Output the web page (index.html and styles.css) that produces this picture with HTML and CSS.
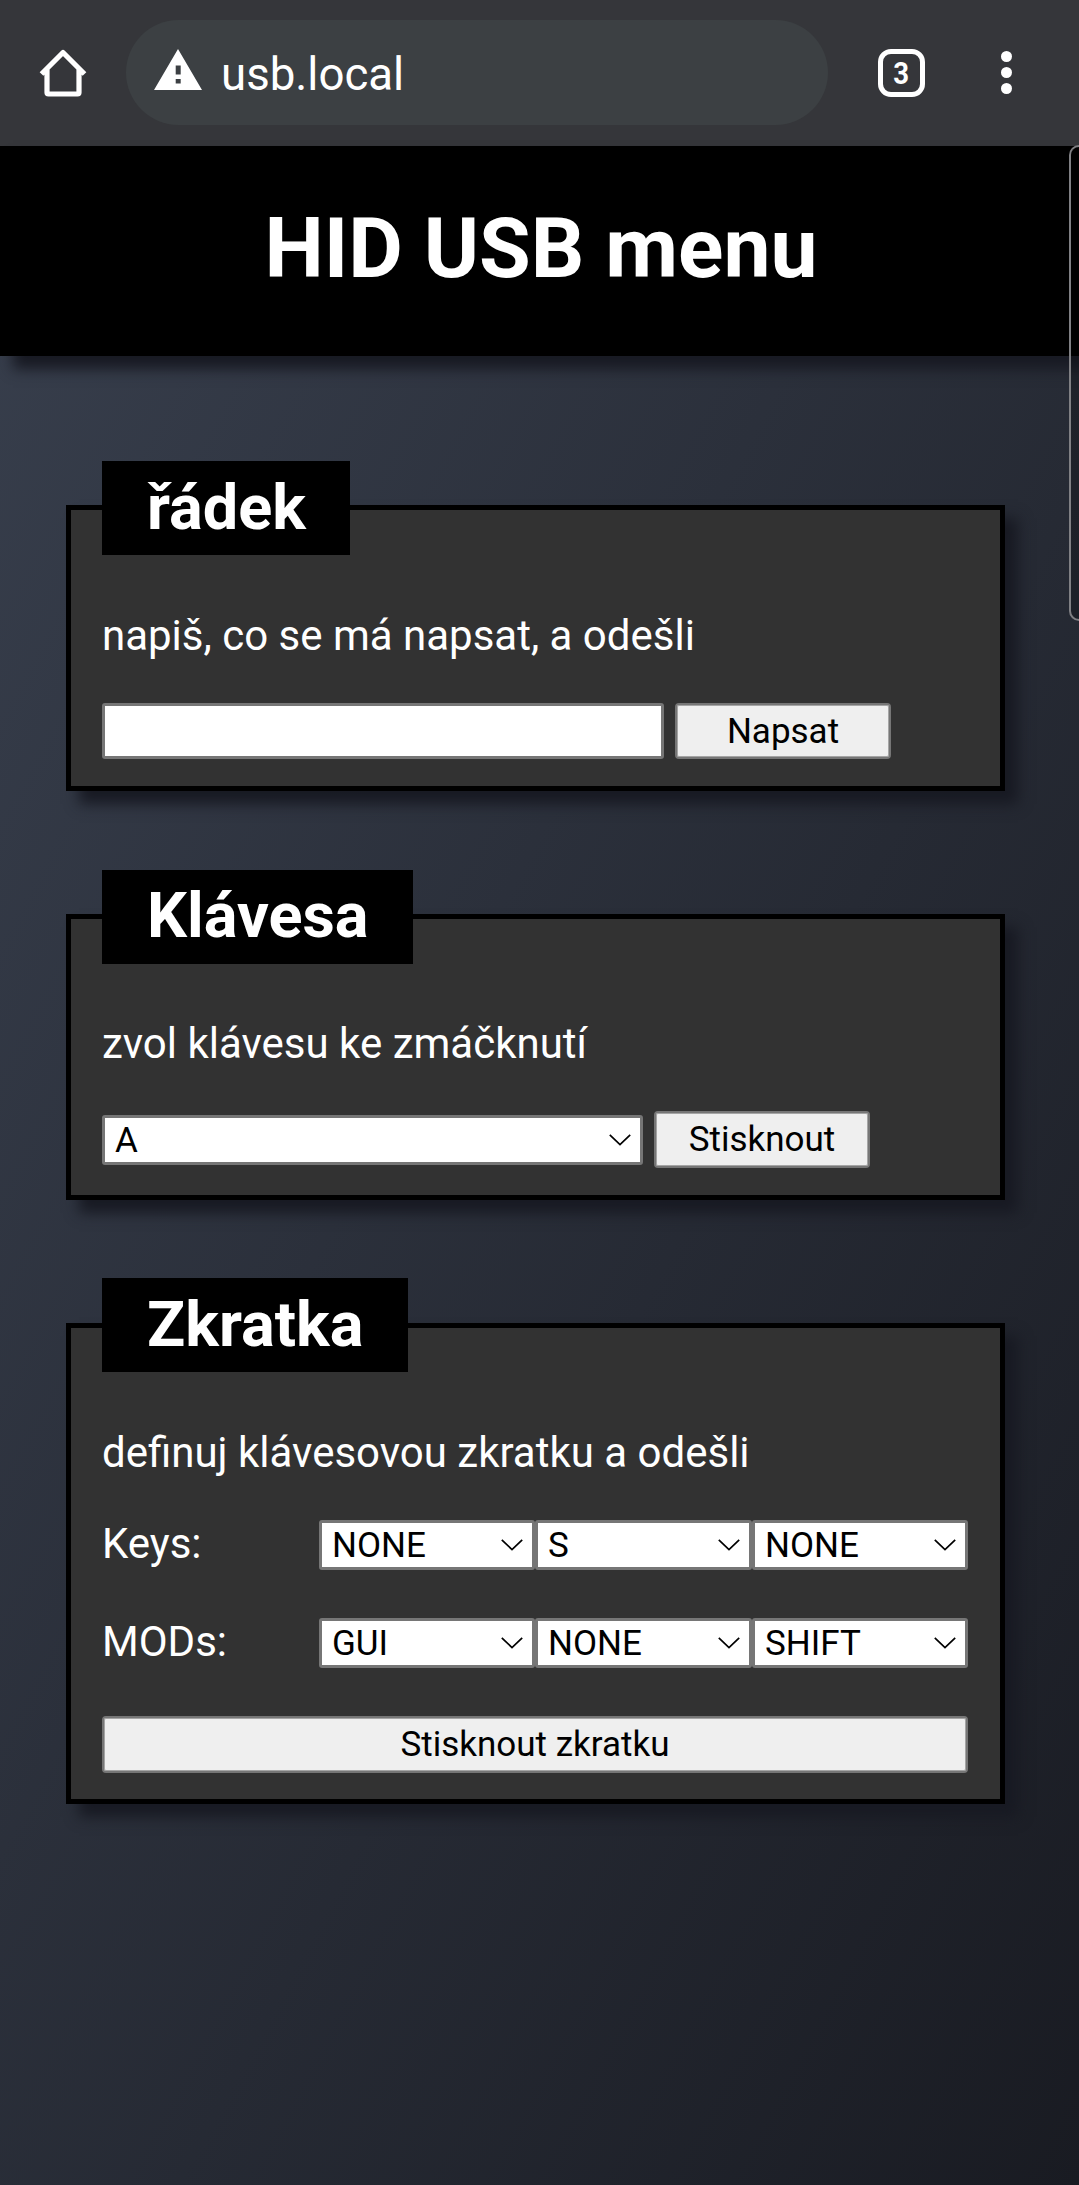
FILE: index.html
```html
<!DOCTYPE html>
<html lang="cs">
<head>
<meta charset="utf-8">
<title>HID USB menu</title>
<link rel="stylesheet" href="styles.css">
</head>
<body>
<div class="toolbar">
  <svg class="home" viewBox="0 0 48 48"><path d="M2.500 25 24 3.500 45.500 25M8 20v23.500q0 1.500 1.500 1.500h29q1.500 0 1.500-1.500V20" fill="none" stroke="#fff" stroke-width="5.200" stroke-linejoin="round"/></svg>
  <div class="address">
    <svg class="warning" viewBox="0 0 48 41"><path fill="#fff" fill-rule="evenodd" d="M24 0 48 41H0ZM21.700 16.500v9h5v-9ZM21.700 30v4.500h5V30Z"/></svg>
    <span>usb.local</span>
  </div>
  <div class="tabs"><span>3</span></div>
  <div class="dots"><i></i><i></i><i></i></div>
</div>
<div class="page">
  <header class="header"><h1>HID USB menu</h1></header>
  <main class="content">
    <section class="card">
      <h2>řádek</h2>
      <p>napiš, co se má napsat, a odešli</p>
      <div class="row">
        <input class="field" type="text">
        <button class="button">Napsat</button>
      </div>
    </section>
    <section class="card card-key">
      <h2>Klávesa</h2>
      <p>zvol klávesu ke zmáčknutí</p>
      <div class="row">
        <div class="select select-wide"><select><option>A</option></select><svg viewBox="0 0 22 12"><path d="M.8.800 11 10.600 21.200.800"/></svg></div>
        <button class="button">Stisknout</button>
      </div>
    </section>
    <section class="card card-shortcut">
      <h2>Zkratka</h2>
      <p>definuj klávesovou zkratku a odešli</p>
      <div class="combo">
        <label>Keys:</label>
        <div class="select"><select><option>NONE</option></select><svg viewBox="0 0 22 12"><path d="M.8.800 11 10.600 21.200.800"/></svg></div>
        <div class="select"><select><option>S</option></select><svg viewBox="0 0 22 12"><path d="M.8.800 11 10.600 21.200.800"/></svg></div>
        <div class="select"><select><option>NONE</option></select><svg viewBox="0 0 22 12"><path d="M.8.800 11 10.600 21.200.800"/></svg></div>
        <label>MODs:</label>
        <div class="select"><select><option>GUI</option></select><svg viewBox="0 0 22 12"><path d="M.8.800 11 10.600 21.200.800"/></svg></div>
        <div class="select"><select><option>NONE</option></select><svg viewBox="0 0 22 12"><path d="M.8.800 11 10.600 21.200.800"/></svg></div>
        <div class="select"><select><option>SHIFT</option></select><svg viewBox="0 0 22 12"><path d="M.8.800 11 10.600 21.200.800"/></svg></div>
      </div>
      <button class="button button-full">Stisknout zkratku</button>
    </section>
  </main>
  <div class="edge-panel"></div>
</div>
</body>
</html>
```
FILE: styles.css
```css
* { box-sizing: border-box; }
body {
  margin: 0;
  height: 2185px;
  display: flex;
  flex-direction: column;
  overflow: hidden;
  font-family: Roboto, "Liberation Sans", sans-serif;
  font-size: 42px;
  color: #fff;
}
.toolbar {
  height: 146px;
  flex: none;
  display: flex;
  align-items: center;
  padding: 0 67px 1px 39px;
  background: #35363a;
}
.home { width: 48px; height: 48px; }
.address {
  width: 702px;
  height: 105px;
  margin-left: 39px;
  padding-left: 28px;
  display: flex;
  align-items: center;
  border-radius: 53px;
  background: #3c4043;
  font-size: 45.600px;
}
.address span { margin-left: 19px; padding-top: 3px; }
.warning { width: 48px; height: 41px; margin-bottom: 6px; }
.tabs {
  width: 47px;
  height: 48px;
  margin-left: 50px;
  display: flex;
  align-items: center;
  justify-content: center;
  border: 5px solid #fff;
  border-radius: 13px;
  font-size: 32px;
  font-weight: 700;
  line-height: 1;
}
.tabs span { transform: scaleX(.86); }
.dots {
  margin-left: auto;
  display: flex;
  flex-direction: column;
  gap: 5px;
}
.dots i { width: 11px; height: 11px; border-radius: 50%; background: #fff; }
.page {
  position: relative;
  flex: 1;
  background: linear-gradient(to bottom right, #383f4d, #191b22);
}
.header {
  height: 210px;
  display: flex;
  justify-content: center;
  padding: 54px 0 0 3px;
  background: #000;
  box-shadow: 13px 13px 13px #181a23;
}
h1 { margin: 0; font-size: 84px; line-height: 98px; }
.content { padding: 105px 74px 0 66px; }
.card {
  height: 286px;
  margin-top: 44px;
  margin-bottom: 123px;
  padding: 0 31px;
  border: 5px solid #000;
  background: #323232;
  box-shadow: 13px 13px 13px #181a23;
}
.card h2 {
  width: max-content;
  height: 94px;
  margin: -49px 0 0;
  padding: 10px 44.500px 0 45px;
  background: #000;
  font-size: 63px;
  line-height: 74px;
}
.card p { margin: 56px 0 0; line-height: 49px; }
.row { display: flex; align-items: center; gap: 11px; margin-top: 43px; }
.field {
  width: 562px;
  height: 56px;
  border: 3px solid #767676;
  border-radius: 3px;
  background: #fff;
}
.button {
  width: 216px;
  height: 56px;
  padding: 0;
  border: 2px solid #767676;
  border-radius: 4px;
  background: #efefef;
  box-shadow: inset 0 0 0 1px #a5a5a5;
  color: #000;
  font: 35px Roboto, sans-serif;
}
.card-key h2 { padding-top: 9px; }
.card-key p { margin-top: 55px; }
.card-key .button { height: 57px; }
.select { position: relative; height: 50px; }
.select-wide { width: 541px; margin-top: 1px; }
.select select {
  display: block;
  width: 100%;
  height: 50px;
  padding: 0 10px;
  border: 3px solid #767676;
  border-radius: 3px;
  background: #fff;
  appearance: none;
  color: #000;
  font: 35px Roboto, sans-serif;
}
.select svg {
  position: absolute;
  right: 12px;
  top: 19px;
  width: 22px;
  height: 12px;
  fill: none;
  stroke: #000;
  stroke-width: 1.700;
}
.card-shortcut { height: 481px; }
.card-shortcut h2 { margin-top: -50px; }
.combo {
  display: grid;
  grid-template-columns: 217px 216px 217px 216px;
  row-gap: 48px;
  margin-top: 43px;
}
.combo label { height: 50px; line-height: 48px; }
.button-full { display: block; width: 866px; height: 57px; margin-top: 48px; }
.edge-panel {
  position: absolute;
  top: -1px;
  right: 0;
  width: 10px;
  height: 476px;
  border: 2px solid #808084;
  border-right: 0;
  border-radius: 12px 0 0 12px;
  background: rgba(0, 0, 0, .2);
}
```
